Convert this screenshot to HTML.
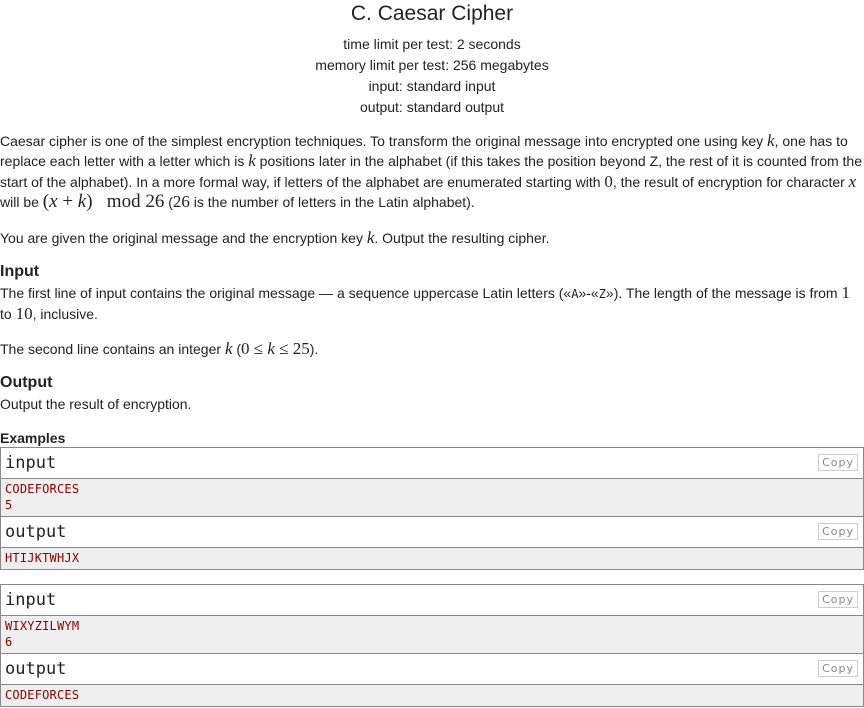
<!DOCTYPE html>
<html><head><style>
body{margin:0;width:864px;height:708px;background:#fff;font-family:"Liberation Sans",Arial,sans-serif;color:#222;position:relative;overflow:hidden}
.a{position:absolute;left:0;white-space:nowrap;font-size:14px;line-height:20px}
.c{width:864px;text-align:center}
.m{font-family:"Liberation Serif",serif;font-style:italic;font-size:17px}
.n{font-family:"Liberation Serif",serif;font-size:17px}
.h{font-weight:bold;font-size:16px}
.box{position:absolute;left:0;width:862px;border:1px solid #888}
.hd{height:30px;border-bottom:1px solid #888;position:relative;font-family:"DejaVu Sans Mono",monospace;font-size:17px;line-height:30px;padding-left:4px;background:#fff}
.bd{background:#efefef;border-bottom:1px solid #888;font-family:"DejaVu Sans Mono",monospace;font-size:12px;letter-spacing:0.2px;line-height:16px;color:#8b0000;padding:2px 4px 3px}
.bd:last-child{border-bottom:none}
.cp{position:absolute;right:5px;top:6px;border:1px solid #ccc;font-family:"DejaVu Sans",sans-serif;font-size:11px;line-height:15px;color:#888;padding:0 3px;letter-spacing:1px}
</style></head><body>
<div class="a c" style="top:2px;font-size:21px;line-height:24px">C. Caesar Cipher</div>
<div class="a c" style="top:34px">time limit per test: 2 seconds</div>
<div class="a c" style="top:55px">memory limit per test: 256 megabytes</div>
<div class="a c" style="top:76px">input: standard input</div>
<div class="a c" style="top:97px">output: standard output</div>
<div class="a" style="top:131px">Caesar cipher is one of the simplest encryption techniques. To transform the original message into encrypted one using key <span class="m">k</span>, one has to</div>
<div class="a" style="top:151px">replace each letter with a letter which is <span class="m">k</span> positions later in the alphabet (if this takes the position beyond Z, the rest of it is counted from the</div>
<div class="a" style="top:172px">start of the alphabet). In a more formal way, if letters of the alphabet are enumerated starting with <span class="n">0</span>, the result of encryption for character <span class="m">x</span></div>
<div class="a" style="top:192px">will be <span class="n" style="font-size:19px">(<i>x</i> + <i>k</i>) &nbsp; mod 26</span> (<span class="n">26</span> is the number of letters in the Latin alphabet).</div>
<div class="a" style="top:228px">You are given the original message and the encryption key <span class="m">k</span>. Output the resulting cipher.</div>
<div class="a h" style="top:262px">Input</div>
<div class="a" style="top:283px">The first line of input contains the original message — a sequence uppercase Latin letters («<span style="font-family:'DejaVu Sans Mono',monospace;font-size:12px">A</span>»-«<span style="font-family:'DejaVu Sans Mono',monospace;font-size:12px">Z</span>»). The length of the message is from <span class="n">1</span></div>
<div class="a" style="top:304px">to <span class="n">10</span>, inclusive.</div>
<div class="a" style="top:339px">The second line contains an integer <span class="m">k</span> (<span class="n">0 ≤ <i>k</i> ≤ 25</span>).</div>
<div class="a h" style="top:373px">Output</div>
<div class="a" style="top:394px">Output the result of encryption.</div>
<div class="a" style="top:428px;font-weight:bold">Examples</div>
<div class="box" style="top:447px">
<div class="hd">input<span class="cp">Copy</span></div>
<div class="bd">CODEFORCES<br>5</div>
<div class="hd" style="border-top:1px solid #888;margin-top:-1px">output<span class="cp">Copy</span></div>
<div class="bd">HTIJKTWHJX</div>
</div>
<div class="box" style="top:584px">
<div class="hd">input<span class="cp">Copy</span></div>
<div class="bd">WIXYZILWYM<br>6</div>
<div class="hd" style="border-top:1px solid #888;margin-top:-1px">output<span class="cp">Copy</span></div>
<div class="bd">CODEFORCES</div>
</div>
</body></html>
